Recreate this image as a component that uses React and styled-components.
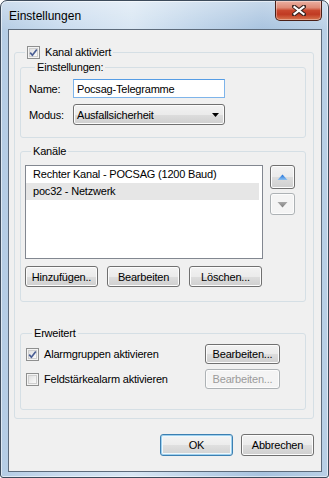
import React from 'react'
import styled, { createGlobalStyle } from 'styled-components'

const GlobalStyle = createGlobalStyle`
  html, body {
    margin: 0;
    padding: 0;
    background: #ffffff;
  }
  body {
    font-family: "Liberation Sans", Arial, sans-serif;
    font-size: 11px;
    letter-spacing: -0.2px;
    color: #000;
  }
`

const Window = styled.div`
  width: 329px;
  height: 478px;
  box-sizing: border-box;
  display: flex;
  flex-direction: column;
  border: 1px solid #3d4b5b;
  border-radius: 7px 7px 3px 3px;
  padding: 0 6px 5px 7px;
  background:
    linear-gradient(180deg, rgba(255,255,255,0.35) 0, rgba(255,255,255,0) 30px),
    linear-gradient(90deg, #b4cce4 0%, #c9dbee 18%, #d8e6f3 40%, #bcd2e8 62%, #a8c3df 80%, #b9d0e6 100%);
  box-shadow: inset 0 0 0 1px rgba(255,255,255,0.55);
`

const TitleBar = styled.div`
  height: 28px;
  display: flex;
  align-items: flex-start;
  flex-shrink: 0;
`

const Title = styled.span`
  font-size: 12px;
  letter-spacing: 0;
  line-height: 14px;
  padding-top: 8px;
  padding-left: 1px;
  color: #000;
`

const CloseButton = styled.div`
  margin-left: auto;
  width: 47px;
  height: 20px;
  box-sizing: border-box;
  border: 1px solid #4a1f16;
  border-top: none;
  border-radius: 0 0 5px 5px;
  background: linear-gradient(180deg, #eab0a2 0%, #de8a76 35%, #c9482e 50%, #c03a22 70%, #d8764f 100%);
  box-shadow: inset 0 0 0 1px rgba(255,255,255,0.35);
  display: flex;
  align-items: center;
  justify-content: center;
`

const Client = styled.div`
  flex: 1;
  display: flex;
  flex-direction: column;
  background: #f0f0f0;
  border: 1px solid #5d6b7b;
  padding: 16px 7px 12px 5px;
`

const Group = styled.fieldset`
  margin: ${p => p.$mt || 0}px 0 0;
  padding: ${p => p.$pad};
  border: 1px solid #d5dfe5;
  border-radius: 3px;
  min-width: 0;
  display: flex;
  flex-direction: column;
`

const Legend = styled.legend`
  padding: 0 2px;
  margin-left: ${p => p.$ml || 6}px;
  line-height: 13px;
  display: flex;
  align-items: center;
  gap: 5px;
`

const Box = styled.span`
  width: 13px;
  height: 13px;
  box-sizing: border-box;
  border: 1px solid #8e8f8f;
  background: linear-gradient(135deg, #d8d8d8 0%, #f2f2f2 60%, #ffffff 100%);
  box-shadow: inset 0 0 0 1px #f4f4f4, inset 0 0 0 2px #cfcfcf;
  display: flex;
  align-items: center;
  justify-content: center;
  flex-shrink: 0;
`

const Check = ({ checked }) =>
  <Box>
    {checked &&
      <svg width="9" height="9" viewBox="0 0 9 9">
        <path d="M1.2 4.6 L3.4 7.2 L7.8 1.4" fill="none" stroke="#4a5e94" strokeWidth="1.7" />
      </svg>}
  </Box>

const FormRow = styled.div`
  display: flex;
  align-items: center;
  margin-top: ${p => p.$mt || 0}px;
`

const Label = styled.span`
  width: 44px;
`

const TextBox = styled.div`
  width: 152px;
  height: 19px;
  box-sizing: border-box;
  border: 1px solid #7eb4ea;
  border-top-color: #569de5;
  background: #fff;
  padding-left: 3px;
  display: flex;
  align-items: center;
`

const Combo = styled.div`
  width: 152px;
  height: 21px;
  box-sizing: border-box;
  border: 1px solid #707070;
  border-radius: 3px;
  background: linear-gradient(180deg, #f2f2f2 0%, #ebebeb 50%, #dddddd 51%, #cfcfcf 100%);
  box-shadow: inset 0 0 0 1px #fcfcfc;
  padding: 0 5px 0 3px;
  display: flex;
  align-items: center;
  justify-content: space-between;
`

const ChannelArea = styled.div`
  display: flex;
  gap: 7px;
`

const List = styled.div`
  width: 238px;
  height: 94px;
  box-sizing: border-box;
  border: 1px solid #828790;
  background: #fff;
  padding: 0 3px 0 0;
`

const ListRow = styled.div`
  height: 17px;
  line-height: 17px;
  padding-left: 7px;
  background: ${p => (p.$selected ? '#e6e6e6' : 'transparent')};
`

const ArrowColumn = styled.div`
  display: flex;
  flex-direction: column;
  gap: 4px;
`

const Button = styled.button`
  width: ${p => p.$w || 73}px;
  height: ${p => p.$h || 21}px;
  box-sizing: border-box;
  padding: 0;
  font: inherit;
  letter-spacing: inherit;
  color: #000;
  border: 1px solid #707070;
  border-radius: 3px;
  background: linear-gradient(180deg, #f2f2f2 0%, #ebebeb 50%, #dddddd 51%, #cfcfcf 100%);
  box-shadow: inset 0 0 0 1px #fcfcfc;
  display: flex;
  align-items: center;
  justify-content: center;

  &:disabled {
    color: #9b9b9b;
    border-color: #adb2b5;
    background: #f4f4f4;
    box-shadow: inset 0 0 0 1px #fcfcfc;
  }
`

const DefaultButton = styled(Button)`
  border-color: #3c7fb1;
  box-shadow: inset 0 0 0 1px #c4e5f6, 0 0 0 0 transparent;
  background: linear-gradient(180deg, #eaf6fd 0%, #d9f0fc 50%, #bee6fd 51%, #a7d9f5 100%);
  background: linear-gradient(180deg, #f4f4f4 0%, #ececec 50%, #dfdfdf 51%, #d2d2d2 100%);
  box-shadow: inset 0 0 0 1px #9ed0ee, inset 0 0 0 2px #f0f8fc;
`

const ButtonRow = styled.div`
  display: flex;
  gap: ${p => p.$gap || 9}px;
  margin-top: ${p => p.$mt || 0}px;
  justify-content: ${p => p.$justify || 'flex-start'};
`

const OptionRow = styled.div`
  display: grid;
  grid-template-columns: 1fr 75px;
  align-items: center;
  margin-top: ${p => p.$mt || 0}px;
`

const OptionLabel = styled.label`
  display: flex;
  align-items: center;
  gap: 5px;
`

const Triangle = ({ up }) =>
  <svg width="11" height="7" viewBox="0 0 11 7">
    <defs>
      <linearGradient id="upg" x1="0" y1="0" x2="0" y2="1">
        <stop offset="0" stopColor="#1c6fd8" />
        <stop offset="1" stopColor="#8ec2f2" />
      </linearGradient>
      <linearGradient id="dng" x1="0" y1="0" x2="0" y2="1">
        <stop offset="0" stopColor="#a8a8a8" />
        <stop offset="1" stopColor="#7e7e7e" />
      </linearGradient>
    </defs>
    {up
      ? <path d="M5.5 0.5 L10.5 6 L0.5 6 Z" fill="url(#upg)" />
      : <path d="M0.5 1 L10.5 1 L5.5 6.5 Z" fill="url(#dng)" />}
  </svg>

const App = () =>
  <>
    <GlobalStyle />
    <Window>
      <TitleBar>
        <Title>Einstellungen</Title>
        <CloseButton>
          <svg width="14" height="11" viewBox="0 0 14 11">
            <path d="M2 1.5 L12 9.5 M12 1.5 L2 9.5" stroke="#3a2420" strokeWidth="4.2" strokeLinecap="square" />
            <path d="M2.5 2 L11.5 9 M11.5 2 L2.5 9" stroke="#ffffff" strokeWidth="2.2" strokeLinecap="square" />
          </svg>
        </CloseButton>
      </TitleBar>
      <Client>
        <Group $pad="2px 7px 8px 5px">
          <Legend $ml={5}>
            <Check checked />
            <span>Kanal aktiviert</span>
          </Legend>

          <Group $pad="5px 0 12px 8px">
            <Legend>Einstellungen:</Legend>
            <FormRow>
              <Label>Name:</Label>
              <TextBox>Pocsag-Telegramme</TextBox>
            </FormRow>
            <FormRow $mt={6}>
              <Label>Modus:</Label>
              <Combo>
                <span>Ausfallsicherheit</span>
                <svg width="7" height="4" viewBox="0 0 7 4">
                  <path d="M0 0 L7 0 L3.5 4 Z" fill="#000" />
                </svg>
              </Combo>
            </FormRow>
          </Group>

          <Group $mt={7} $pad="7px 0 14px 4px">
            <Legend>Kanäle</Legend>
            <ChannelArea>
              <List>
                <ListRow>Rechter Kanal - POCSAG (1200 Baud)</ListRow>
                <ListRow $selected>poc32 - Netzwerk</ListRow>
              </List>
              <ArrowColumn>
                <Button $w={25} $h={24}><Triangle up /></Button>
                <Button $w={25} $h={22} disabled><Triangle /></Button>
              </ArrowColumn>
            </ChannelArea>
            <ButtonRow $mt={7}>
              <Button>Hinzufügen..</Button>
              <Button>Bearbeiten</Button>
              <Button>Löschen...</Button>
            </ButtonRow>
          </Group>

          <Group $mt={25} $pad="4px 25px 20px 5px">
            <Legend>Erweitert</Legend>
            <OptionRow>
              <OptionLabel><Check checked />Alarmgruppen aktivieren</OptionLabel>
              <Button $w={75} $h={20}>Bearbeiten...</Button>
            </OptionRow>
            <OptionRow $mt={5}>
              <OptionLabel><Check />Feldstärkealarm aktivieren</OptionLabel>
              <Button $w={75} $h={20} disabled>Bearbeiten...</Button>
            </OptionRow>
          </Group>
        </Group>

        <ButtonRow $mt={15} $gap={8} $justify="flex-end">
          <DefaultButton $h={22}>OK</DefaultButton>
          <Button $h={22}>Abbrechen</Button>
        </ButtonRow>
      </Client>
    </Window>
  </>

export default App
